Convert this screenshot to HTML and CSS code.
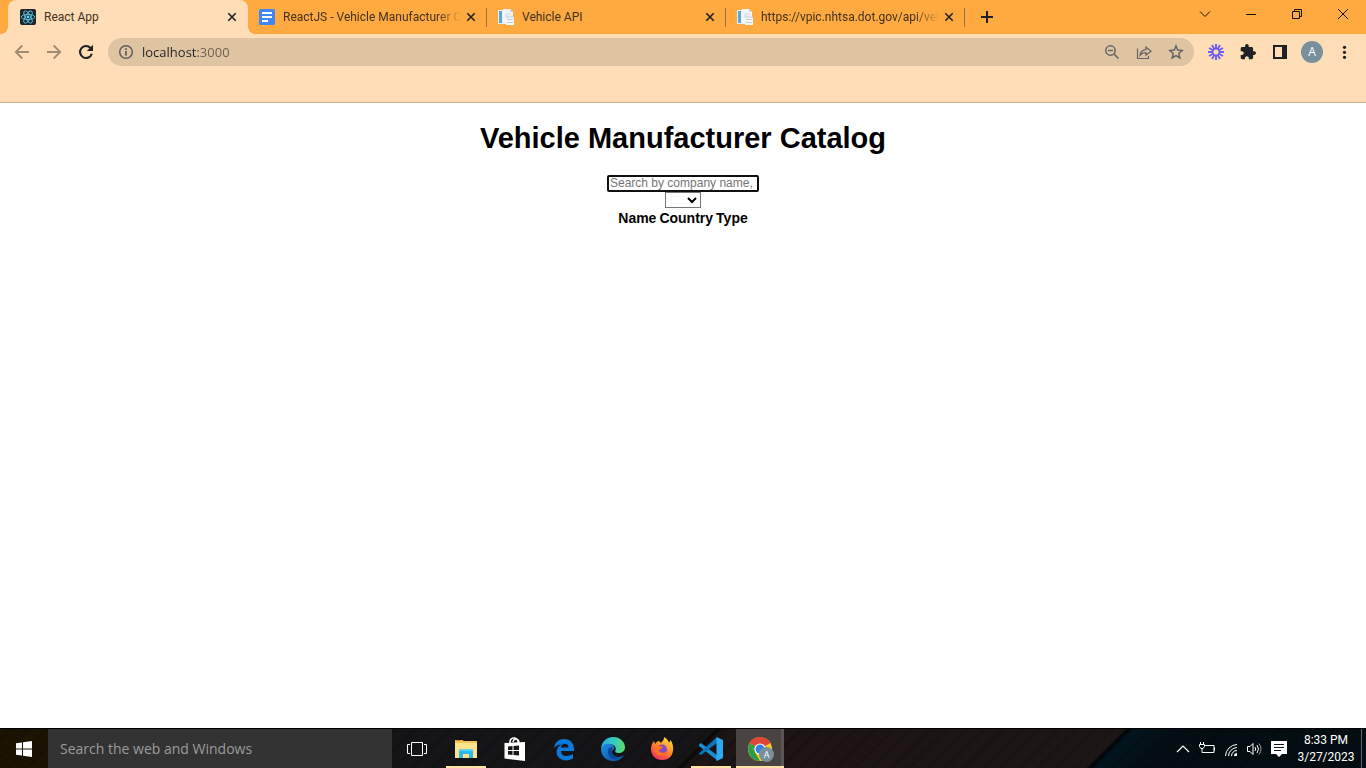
FILE: index.html
```html
<!DOCTYPE html>
<html lang="en">
<head>
<meta charset="utf-8">
<title>React App</title>
<link rel="stylesheet" href="styles.css">
</head>
<body>
<header class="browser">
  <div class="tabstrip">
    <nav class="tabs" aria-label="Tabs">
      <div class="tab tab-active">
        <svg class="favicon" viewBox="0 0 16 16"><rect width="16" height="16" rx="2" fill="#20232a"/><g fill="none" stroke="#53c1de" stroke-width="0.9"><ellipse cx="8" cy="8" rx="6.8" ry="2.6"/><ellipse cx="8" cy="8" rx="6.8" ry="2.6" transform="rotate(60 8 8)"/><ellipse cx="8" cy="8" rx="6.8" ry="2.6" transform="rotate(120 8 8)"/></g><circle cx="8" cy="8" r="1.4" fill="#61dafb"/></svg>
        <a class="tab-title" href="#app">React App</a>
        <button class="tab-close" aria-label="Close React App"><svg viewBox="0 0 10 10"><path d="M1.3 1.3l7.4 7.4M8.7 1.3L1.3 8.7"/></svg></button>
      </div>
      <div class="tab">
        <svg class="favicon" viewBox="0 0 16 16"><rect width="16" height="16" rx="1.5" fill="#4285f4"/><path d="M3 3h10v2H3zM3 7h10v2H3zM3 11h6v2H3z" fill="#fff"/></svg>
        <a class="tab-title tab-title-long" href="#docs">ReactJS - Vehicle Manufacturer C</a>
        <button class="tab-close" aria-label="Close ReactJS document"><svg viewBox="0 0 10 10"><path d="M1.3 1.3l7.4 7.4M8.7 1.3L1.3 8.7"/></svg></button>
      </div>
      <div class="tab">
        <svg class="favicon" viewBox="0 0 16 16"><path d="M0 1h9v14H0z" fill="#e9f1f7"/><path d="M1 2h3v12H1z" fill="#5ba8d8"/><path d="M5 0h7l3 3v11H5z" fill="#f3f5f8"/><path d="M12 0v3h3z" fill="#cfd8e0"/><path d="M7 5h6M7 7h3" stroke="#d2dae2"/><path d="M8 8h8v8H8z" fill="#f4f6f8"/><path d="M8 8h8M9 10.500h6M9 13.500h6" stroke="#c3ced9"/></svg>
        <a class="tab-title" href="#api">Vehicle API</a>
        <button class="tab-close" aria-label="Close Vehicle API"><svg viewBox="0 0 10 10"><path d="M1.3 1.3l7.4 7.4M8.7 1.3L1.3 8.7"/></svg></button>
      </div>
      <div class="tab">
        <svg class="favicon" viewBox="0 0 16 16"><path d="M0 1h9v14H0z" fill="#e9f1f7"/><path d="M1 2h3v12H1z" fill="#5ba8d8"/><path d="M5 0h7l3 3v11H5z" fill="#f3f5f8"/><path d="M12 0v3h3z" fill="#cfd8e0"/><path d="M7 5h6M7 7h3" stroke="#d2dae2"/><path d="M8 8h8v8H8z" fill="#f4f6f8"/><path d="M8 8h8M9 10.500h6M9 13.500h6" stroke="#c3ced9"/></svg>
        <a class="tab-title tab-title-long" href="#vpic">https://vpic.nhtsa.dot.gov/api/veh</a>
        <button class="tab-close" aria-label="Close vpic.nhtsa.dot.gov"><svg viewBox="0 0 10 10"><path d="M1.3 1.3l7.4 7.4M8.7 1.3L1.3 8.7"/></svg></button>
      </div>
    </nav>
    <button class="new-tab" aria-label="New tab"><svg viewBox="0 0 12 12"><path d="M6 0v12M0 6h12" stroke="#202124" stroke-width="2"/></svg></button>
    <div class="window-controls">
      <button aria-label="Search tabs"><svg viewBox="0 0 12 12"><path d="M1 3.500l5 5 5-5"/></svg></button>
      <button aria-label="Minimize"><svg viewBox="0 0 12 12"><path d="M1 6.500h10"/></svg></button>
      <button aria-label="Restore"><svg viewBox="0 0 12 12"><path d="M1.500 3.500h7v7h-7zM3.500 3V1.500h7v7H9"/></svg></button>
      <button aria-label="Close window"><svg viewBox="0 0 12 12"><path d="M1 1l10 10M11 1L1 11"/></svg></button>
    </div>
  </div>
  <div class="toolbar">
    <div class="tools">
      <button aria-label="Back"><svg viewBox="0 0 16 16"><path d="M15 8H2M8.300 1.500L1.800 8l6.500 6.500" fill="none" stroke="#a28b73" stroke-width="1.800"/></svg></button>
      <button aria-label="Forward"><svg viewBox="0 0 16 16"><path d="M1 8h13M7.700 1.500L14.200 8l-6.500 6.500" fill="none" stroke="#a28b73" stroke-width="1.800"/></svg></button>
      <button aria-label="Reload"><svg viewBox="0 0 16 16"><path d="M13.800 9.700A6 6 0 1 1 12.500 4" fill="none" stroke="#202124" stroke-width="2.100"/><path d="M15 .800V7H8.800z" fill="#202124"/></svg></button>
    </div>
    <div class="address">
      <svg class="info" viewBox="0 0 16 16"><circle cx="8" cy="8" r="6.300" fill="none" stroke="#5f5f5f" stroke-width="1.500"/><path d="M7.100 7h1.800v4.500H7.100zM7.100 4.300h1.800V6H7.100z" fill="#5f5f5f"/></svg>
      <input class="url" type="text" aria-label="Address" value="localhost:3000">
      <button aria-label="Zoom"><svg viewBox="0 0 16 16"><g fill="none" stroke="#626468" stroke-width="1.500"><circle cx="6.500" cy="6.500" r="4.700"/><path d="M10 10l4.500 4.500M4 6.500h5"/></g></svg></button>
      <button aria-label="Share"><svg viewBox="0 0 16 16"><path d="M1.500 4.500v10h11V12M4 11.300c.5-4 2.500-5.500 6-5.700V3l5 4.300-5 4V8.700c-2.700 0-4.500.7-6 2.600z" fill="none" stroke="#626468" stroke-width="1.200"/></svg></button>
      <button aria-label="Bookmark"><svg viewBox="0 0 16 16"><path d="M8 2l1.700 4.100 4.500.4-3.400 3 1 4.400L8 11.600l-3.800 2.300 1-4.400-3.400-3 4.500-.4z" fill="none" stroke="#626468" stroke-width="1.500"/></svg></button>
    </div>
    <div class="tools">
      <button aria-label="Loom"><svg viewBox="0 0 16 16"><g stroke="#6b5cf2" stroke-width="1.900"><path d="M8 0v16M0 8h16M4 1.070l8 13.860M12 1.070L4 14.930M1.070 4l13.860 8M14.930 4L1.070 12"/></g><circle cx="8" cy="8" r="3.300" fill="#ffddb6" stroke="#6b5cf2" stroke-width="1.500"/></svg></button>
      <button aria-label="Extensions"><svg viewBox="1 1 22 22"><path d="M20.500 11H19V7c0-1.100-.9-2-2-2h-4V3.500a2.500 2.500 0 0 0-5 0V5H4c-1.100 0-1.990.9-1.990 2v3.800H3.500c1.490 0 2.700 1.210 2.700 2.700s-1.210 2.700-2.700 2.700H2V20c0 1.100.9 2 2 2h3.800v-1.500c0-1.490 1.210-2.700 2.700-2.700s2.700 1.210 2.700 2.700V22H17c1.100 0 2-.9 2-2v-4h1.500a2.500 2.500 0 0 0 0-5z" fill="#202124"/></svg></button>
      <button aria-label="Side panel"><svg viewBox="0 0 16 16"><path d="M1 1h14v14H1zM3 3v10h7V3z" fill="#202124" fill-rule="evenodd"/></svg></button>
      <button aria-label="Profile"><span class="avatar">A</span></button>
      <button aria-label="Menu"><svg viewBox="0 0 16 16"><g fill="#202124"><circle cx="8.500" cy="3.300" r="1.600"/><circle cx="8.500" cy="8.300" r="1.600"/><circle cx="8.500" cy="13.300" r="1.600"/></g></svg></button>
    </div>
  </div>
</header>

<main class="page">
  <h1 class="heading">Vehicle Manufacturer Catalog</h1>
  <input class="search" type="text" aria-label="Search manufacturers" placeholder="Search by company name, country or type">
  <select class="filter" aria-label="Vehicle type"><option></option></select>
  <table class="results">
    <thead><tr><th>Name</th><th>Country</th><th>Type</th></tr></thead>
  </table>
</main>

<footer class="taskbar">
  <button class="start" aria-label="Start"><svg viewBox="0 0 16 16"><path d="M0 2.300L6 1.400V7.500H0zM7 1.200L16 0V7.500H7zM0 8.500H6V14.600L0 13.700zM7 8.500H16V16L7 14.800z" fill="#fff"/></svg></button>
  <input class="taskbar-search" type="text" aria-label="Search" placeholder="Search the web and Windows">
  <nav class="apps" aria-label="Applications">
    <button class="app" aria-label="Task view"><svg viewBox="0 0 24 24"><path d="M6.500 5.500h11v13h-11zM5 7.500H2.500v9H5M19 7.500h2.500v9H19" fill="none" stroke="#fff"/></svg></button>
    <button class="app app-open" aria-label="File Explorer"><svg viewBox="0 0 24 24"><path d="M1 3h7l2 1h13v16H1z" fill="#f0c65a"/><path d="M2 3.500h5" stroke="#f47f20"/><path d="M1 6h22v15H1z" fill="#ffe28a"/><path d="M5 12h14v9h-4v-4H9v4H5z" fill="#2bb9e8"/><path d="M5 12h14v2H5z" fill="#59d3f2"/></svg></button>
    <button class="app" aria-label="Store"><svg viewBox="0 0 24 24"><path d="M7 6V4C8 0 14 0 15 4v2M10 5c1-4 6-4 6 1" fill="none" stroke="#fff" stroke-width="1.500"/><path d="M1.500 6L22 5v19L1.500 21.500z" fill="#fff"/><path d="M5 9.500l4.500-.5v4H5zM10.500 8.900L16 8.500V13h-5.500zM5 14h4.500v4L5 17.500zM10.500 14H16v4.500l-5.500-.5z" fill="#171719"/></svg></button>
    <button class="app" aria-label="Edge Legacy"><svg viewBox="0 0 24 24"><path d="M2 11C3 5 7 2 12 2c6 0 10 4 10 10v2H9c0 6 7 6 12 3v4.500C13 26 4 22 4.500 14.500 5 11 7 8.500 10 7.500c-4 0-6 1.500-8 3.500zM9 10.500h7.500C16.500 5.500 9.500 5.500 9 10.500z" fill="#0b79d8" fill-rule="evenodd"/></svg></button>
    <button class="app" aria-label="Edge"><svg viewBox="0 0 24 24"><defs><linearGradient id="edge-top"><stop stop-color="#29a9e9"/><stop offset=".6" stop-color="#37cdbd"/><stop offset="1" stop-color="#65dc57"/></linearGradient><linearGradient id="edge-low" x2="1" y2="1"><stop stop-color="#1d8de0"/><stop offset="1" stop-color="#0c4ba0"/></linearGradient></defs><path d="M0 11C1 4 6 0 12 0c7 0 12 5 12 10 0 4-3 6-6.500 6-2.500 0-4-1-3-3 1-3-1-5.500-5-5.500C5 7.500 1 9 0 12z" fill="url(#edge-top)"/><path d="M0 12c1-4 5-6 9-5 3 .5 5 3 4 5-5 3-.5 9 5 8 2 0 3-1 5-2-2 4-6 6-11 6C5 24 0 19 0 12z" fill="url(#edge-low)"/><path d="M7 15c-.500-4 3-6 5-4-3 3 0 9 6 9-5 4-11 1-11-5z" fill="#0b4796"/></svg></button>
    <button class="app" aria-label="Firefox"><svg viewBox="0 0 24 24"><defs><linearGradient id="fox" x1=".8" y1="0" x2=".2" y2="1"><stop stop-color="#ffe14a"/><stop offset=".45" stop-color="#ff8c24"/><stop offset="1" stop-color="#f2266c"/></linearGradient></defs><path d="M14 0c3 1.500 4.500 3.500 5 6l1.500-3C23 7 23.500 10 23 14c-1 6-5 9-11 9C5 23 1 18 1 12c0-3 1-6 3-8l1 3c1-2 3-3 4-3L11 6c1-2 3-2 3-6z" fill="url(#fox)"/><circle cx="12" cy="12.500" r="5" fill="#8148c9"/><path d="M5 9c3-1 5 0 8 1-1 2-3 2-4 3 0 3 5 4 8 1-1 5-9 7-12 1z" fill="#ff721e"/></svg></button>
    <button class="app app-open" aria-label="Visual Studio Code"><svg viewBox="0 0 24 24"><path d="M0 7.500L2 6l17 13v5L0 9z" fill="#168fd7"/><path d="M0 16.500L18 0v6L2 18l-2-1z" fill="#0877bd"/><path d="M17.500 0L24 3v18l-6.500 3z" fill="#2faaf1"/></svg></button>
    <button class="app app-current" aria-label="Chrome"><svg viewBox="0 0 24 24"><circle cx="12" cy="12" r="12" fill="#f7c928"/><path d="M12 12L1.600 6C6-2 18-2 22.400 6z" fill="#e04436"/><path d="M1.600 6L12 24C3 24-2.500 14 1.600 6z" fill="#299b4a"/><path d="M7 15l-5.400-9L12 12z" fill="#299b4a"/><circle cx="12" cy="12" r="5.600" fill="#fff"/><circle cx="12" cy="12" r="4.500" fill="#377ee8"/></svg><span class="badge">A</span></button>
  </nav>
  <div class="tray">
    <button aria-label="Show hidden icons"><svg viewBox="0 0 16 16"><path d="M2 11l6-6 6 6" fill="none" stroke="#fff" stroke-width="1.200"/></svg></button>
    <button aria-label="Battery"><svg viewBox="0 0 16 16"><path d="M6 4.500h9v7H6M15.500 6.500v3M1.500 1v2M4.500 1v2M3 8v3.500h3" fill="none" stroke="#fff"/><path d="M.5 3.500h5v2L4 7.500H2L.5 5.500z" fill="none" stroke="#fff"/></svg></button>
    <button aria-label="Network"><svg viewBox="0 0 16 16"><path d="M2.500 15A12 12 0 0 1 14 3.500M5.500 15A9 9 0 0 1 14 6.500M8.500 15A6 6 0 0 1 14 9.500" fill="none" stroke="#fff"/><path d="M11 15a3 3 0 0 1 3-3v3z" fill="#fff"/></svg></button>
    <button aria-label="Volume"><svg viewBox="0 0 16 16"><path d="M.5 5.500H3l3-3v11l-3-3H.5zM8 6q1.500 2 0 4M10 4q3 4 0 8" fill="none" stroke="#fff"/><path d="M12 2.500q4 5.500 0 11" fill="none" stroke="#999"/></svg></button>
    <button aria-label="Notifications"><svg viewBox="0 0 16 16"><path d="M0 0h16v13h-5l-3 3-3-3H0z" fill="#fff"/><path d="M3 3.500h10M3 6.500h10M3 9.500h7" stroke="#0c171b"/></svg></button>
    <button class="clock"><time datetime="2023-03-27T20:33">8:33 PM<br>3/27/2023</time></button>
    <button class="show-desktop" aria-label="Show desktop"></button>
  </div>
</footer>
</body>
</html>
```

FILE: styles.css
```css
* { box-sizing: border-box; }

body {
  margin: 0;
  min-height: 100vh;
  display: flex;
  flex-direction: column;
  background: #fff;
  font-family: "Open Sans", "Noto Sans", sans-serif;
  font-size: 12px;
  color: #202124;
}

button {
  display: flex;
  align-items: center;
  justify-content: center;
  padding: 0;
  border: 0;
  background: none;
  color: inherit;
  font: inherit;
}

input, select { font: inherit; }
svg { display: block; flex: none; }

/* Browser frame */
.browser {
  background: #ffddb6;
  border-bottom: 1px solid #c9b294;
}

.tabstrip {
  display: flex;
  height: 34px;
  padding-left: 8px;
  background: #ffaa40;
}

.tabs { display: flex; }

.tab {
  position: relative;
  display: flex;
  align-items: center;
  width: 239px;
  padding: 0 9px 0 12px;
  font-family: Roboto, "Open Sans", sans-serif;
}

.tab:not(.tab-active)::after {
  content: "";
  position: absolute;
  right: -1px;
  top: 8px;
  width: 1px;
  height: 19px;
  background: #9a7140;
}

.tab-active {
  width: 240px;
  margin-right: -1px;
  padding-right: 10px;
  background: #ffddb6;
  border-radius: 8px 8px 0 0;
}

.tab-active::before, .tab-active::after {
  content: "";
  position: absolute;
  bottom: 0;
  width: 8px;
  height: 8px;
}

.tab-active::before {
  left: -8px;
  background: radial-gradient(circle at 0 0, transparent 8px, #ffddb6 8px);
}

.tab-active::after {
  right: -8px;
  background: radial-gradient(circle at 100% 0, transparent 8px, #ffddb6 8px);
}

.favicon { width: 16px; height: 16px; }

.tab-title {
  flex: 1;
  min-width: 0;
  margin: 0 4px 0 8px;
  white-space: nowrap;
  color: #40311f;
  text-decoration: none;
}

.tab-title-long {
  mask-image: linear-gradient(to right, #000 calc(100% - 24px), transparent);
}

.tab-close { width: 12px; height: 16px; }
.tab-close svg { width: 10px; height: 10px; stroke: #202124; stroke-width: 1.6; }

.new-tab { width: 46px; }
.new-tab svg { width: 12px; height: 12px; }

.window-controls {
  display: flex;
  height: 28px;
  margin-left: auto;
}

.window-controls button { width: 46px; }
.window-controls svg { width: 12px; height: 12px; fill: none; stroke: #111; }

.toolbar {
  display: flex;
  align-items: center;
  gap: 6px;
  height: 36px;
  margin-bottom: 32px;
  padding: 0 6px;
}

.tools { display: flex; }
.tools button { width: 32px; height: 28px; }
.tools svg { width: 16px; height: 16px; }

.address {
  flex: 1;
  display: flex;
  align-items: center;
  height: 28px;
  padding: 0 2px 0 10px;
  border-radius: 14px;
  background: #dfc4a1;
}

.address button { width: 32px; height: 28px; }
.address svg { width: 16px; height: 16px; }

.url {
  flex: 1;
  min-width: 0;
  margin-left: 8px;
  padding: 0;
  border: 0;
  outline: 0;
  background: linear-gradient(to right, #202124 56px, #6b6053 56px);
  background-clip: text;
  -webkit-text-fill-color: transparent;
  font-size: 13px;
}

.avatar {
  width: 22px;
  border-radius: 50%;
  background: #78909c;
  color: #fff;
  font-size: 12px;
  line-height: 22px;
}

/* Catalog page */
.page {
  flex: 1;
  display: flex;
  flex-direction: column;
  align-items: center;
  font-family: "Liberation Sans", Arial, sans-serif;
  color: #000;
}

.heading {
  margin: 19px 0 20px;
  font-size: 29px;
  line-height: 33px;
}

.search {
  width: 152px;
  height: 17px;
  padding: 0 1px 1px;
  border: 2px solid #101010;
  border-radius: 2px;
  font-size: 12px;
}

.search::placeholder { color: #757575; }

.filter {
  width: 36px;
  height: 16px;
  border: 1px solid #767676;
  border-radius: 0;
  background: #fff;
}

.results {
  border-spacing: 3px 2px;
  font-size: 14px;
  line-height: 16px;
}

.results th { padding: 0; }

/* Windows taskbar */
.taskbar {
  display: flex;
  height: 40px;
  border-top: 1px solid #000;
  background:
    repeating-linear-gradient(135deg, transparent 0 5px, rgba(0, 0, 0, 0.15) 7px 8px, transparent 10px 13px),
    linear-gradient(135deg, #1c1403 48px, #151518 100px, #151518 505px, #080708 508px, #1d1414 512px, #1d1616 795px, #010508 798px, #02151e 802px, #030d12 840px);
}

.start { width: 48px; }
.start svg { width: 16px; height: 16px; }

.taskbar-search {
  width: 344px;
  padding: 0 12px;
  border: 0;
  background: #333;
  font-size: 14px;
  color: #fff;
}

.taskbar-search::placeholder { color: #9b9b9b; }

.apps { display: flex; gap: 1px; }

.app {
  position: relative;
  width: 48px;
}

.app:first-child { width: 49px; }

.app svg { width: 24px; height: 24px; }

.app-open::after, .app-current::after {
  content: "";
  position: absolute;
  left: 4px;
  right: 4px;
  bottom: 0;
  height: 2px;
  background: #ffe3a4;
}

.app-current {
  background: #494442;
  box-shadow: inset -3px 0 #5b5553;
}

.app-current::after { left: 0; right: 0; }

.badge {
  position: absolute;
  right: 10px;
  bottom: 6px;
  width: 15px;
  border-radius: 50%;
  background: #78909c;
  color: #fff;
  font-size: 9px;
  line-height: 15px;
}

.tray {
  display: flex;
  margin-left: auto;
  color: #fff;
}

.tray button { width: 24px; }
.tray svg { width: 16px; height: 16px; }

.tray .clock {
  width: 70px;
  font-family: Roboto, "Open Sans", sans-serif;
  line-height: 17px;
}

.tray .show-desktop {
  width: 5px;
  border-left: 1px solid #5d676b;
}
```
